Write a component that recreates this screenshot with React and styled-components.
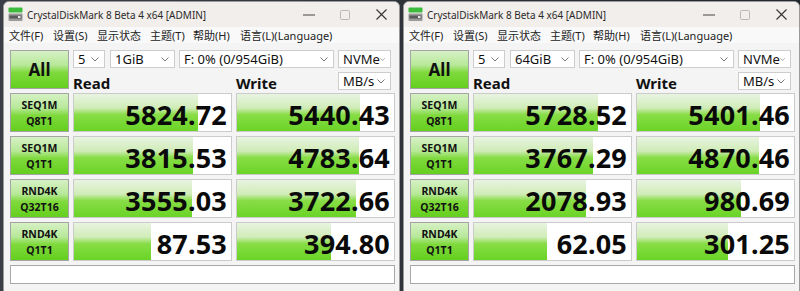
import React from "react";
import styled, { createGlobalStyle } from "styled-components";

const GlobalStyle = createGlobalStyle`
  html, body {
    margin: 0;
    padding: 0;
    width: 800px;
    height: 291px;
    overflow: hidden;
    background: #2b3038;
  }
  * { box-sizing: border-box; }
`;

const UI_FONT = `"Noto Sans", "Noto Sans CJK SC", sans-serif`;

const Desktop = styled.div`
  display: flex;
  gap: 3px;
  padding: 1px 0 0 3px;
  height: 291px;
  background: linear-gradient(90deg, #3a3f47 0%, #23282f 100%);
`;

const Window = styled.div`
  width: 397px;
  height: 300px;
  display: flex;
  flex-direction: column;
  background: #f3f3f3;
  border: 1px solid #9a9a9a;
  border-radius: 6px 6px 0 0;
  overflow: hidden;
  font-family: ${UI_FONT};
`;

const TitleBar = styled.div`
  height: 25px;
  display: flex;
  align-items: center;
  background: #f2eeeb;
  padding-left: 4px;
`;

const TitleText = styled.div`
  flex: 1;
  margin-left: 4px;
  font-size: 10px;
  color: #2a2a2a;
  white-space: nowrap;
`;

const Controls = styled.div`
  display: flex;
  height: 100%;
`;

const ControlButton = styled.div`
  width: 36px;
  height: 100%;
  display: flex;
  align-items: center;
  justify-content: center;
`;

const MenuBar = styled.div`
  height: 16px;
  display: flex;
  align-items: center;
  padding-left: 5px;
  background: #f9f9f9;
  font-size: 11px;
  color: #222;
`;

const MenuItem = styled.span`
  flex: none;
  width: ${({ $w }) => $w}px;
  white-space: nowrap;
`;

const Content = styled.div`
  display: grid;
  grid-template-columns: 59px 159px 159px;
  grid-template-rows: 39px repeat(4, 39px) 19px;
  gap: 4px;
  padding: 7px 0 0 6px;
  background: #f4f4f4;
  flex: 1;
`;

const greenFill = `linear-gradient(180deg, #d6f1c4 0%, #b7e898 38%, #7fd93c 58%, #64cf1e 100%)`;

const AllButton = styled.div`
  border: 1px solid #a4a4a4;
  background: ${greenFill};
  display: flex;
  align-items: center;
  justify-content: center;
  font-weight: 700;
  font-size: 17px;
  color: #111;
`;

const Header = styled.div`
  grid-column: 2 / 4;
  display: flex;
  flex-direction: column;
  gap: 4px;
`;

const ComboRow = styled.div`
  display: flex;
  height: 18px;
`;

const Combo = styled.div`
  width: ${({ $w }) => $w}px;
  margin-left: ${({ $ml }) => $ml || 0}px;
  height: 18px;
  background: #fff;
  border: 1px solid #cdcdcd;
  display: flex;
  align-items: center;
  justify-content: space-between;
  padding: 0 5px 0 4px;
  font-size: 13px;
  color: #111;
  white-space: nowrap;
`;

const LabelRow = styled.div`
  display: flex;
  align-items: center;
  height: 18px;
`;

const ColumnLabel = styled.div`
  width: ${({ $w }) => $w}px;
  font-weight: 700;
  font-size: 15px;
  color: #111;
  line-height: 18px;
  padding-top: 4px;
`;

const TestLabel = styled.div`
  border: 1px solid #a4a4a4;
  background: ${greenFill};
  display: flex;
  flex-direction: column;
  align-items: center;
  justify-content: center;
  font-weight: 700;
  font-size: 10.5px;
  line-height: 16px;
  color: #111;
`;

const Cell = styled.div`
  position: relative;
  background: #fff;
  border: 1px solid #cbcbcb;
  overflow: hidden;
`;

const Bar = styled.div`
  position: absolute;
  left: 0;
  top: 0;
  bottom: 0;
  background: linear-gradient(180deg, #e8f4e0 0%, #d0ecb8 38%, #88dd46 56%, #6ad426 100%);
`;

const Value = styled.div`
  position: relative;
  height: 100%;
  display: flex;
  align-items: center;
  justify-content: flex-end;
  padding: 3px 4px 0 0;
  font-weight: 700;
  font-size: 27px;
  letter-spacing: 0.2px;
  color: #0a0a0a;
`;

const StatusBar = styled.div`
  grid-column: 1 / 4;
  background: #fff;
  border: 1px solid #a8a8a8;
`;

const Chevron = () => (
  <svg width="8" height="5" viewBox="0 0 8 5">
    <path d="M0.5 0.5 L4 4 L7.5 0.5" fill="none" stroke="#7a7a7a" strokeWidth="1" />
  </svg>
);

const AppIcon = () => (
  <svg width="15" height="15" viewBox="0 0 15 15">
    <rect x="0.5" y="0.5" width="14" height="5" rx="1" fill="#3dbb3d" />
    <rect x="0.5" y="6.5" width="14" height="7.5" rx="1" fill="#9a9a9a" />
    <rect x="1.5" y="8.5" width="12" height="3" fill="#5a5a5a" />
    <rect x="10" y="9" width="2.5" height="2" fill="#e8e8e8" />
  </svg>
);

const barWidth = (v) => Math.max(0, Math.min(1, 0.1646 * Math.log10(v) + 0.17)) * 100;

const tests = [
  ["SEQ1M", "Q8T1"],
  ["SEQ1M", "Q1T1"],
  ["RND4K", "Q32T16"],
  ["RND4K", "Q1T1"],
];

const windows = [
  {
    size: "1GiB",
    results: [
      ["5824.72", "5440.43"],
      ["3815.53", "4783.64"],
      ["3555.03", "3722.66"],
      ["87.53", "394.80"],
    ],
  },
  {
    size: "64GiB",
    results: [
      ["5728.52", "5401.46"],
      ["3767.29", "4870.46"],
      ["2078.93", "980.69"],
      ["62.05", "301.25"],
    ],
  },
];

const menu = [
  ["文件(F)", 44],
  ["设置(S)", 44],
  ["显示状态", 53],
  ["主题(T)", 43],
  ["帮助(H)", 47],
  ["语言(L)(Language)", 140],
];

const ResultCell = ({ value }) => (
  <Cell>
    <Bar style={{ width: `${barWidth(parseFloat(value))}%` }} />
    <Value>{value}</Value>
  </Cell>
);

const DiskMarkWindow = ({ size, results }) => (
  <Window>
    <TitleBar>
      <AppIcon />
      <TitleText>CrystalDiskMark 8 Beta 4 x64 [ADMIN]</TitleText>
      <Controls>
        <ControlButton>
          <svg width="12" height="2" viewBox="0 0 12 2">
            <line x1="0" y1="1" x2="12" y2="1" stroke="#444" strokeWidth="1" />
          </svg>
        </ControlButton>
        <ControlButton>
          <svg width="10" height="10" viewBox="0 0 10 10">
            <rect x="0.5" y="0.5" width="9" height="9" rx="1" fill="none" stroke="#b8b8b8" />
          </svg>
        </ControlButton>
        <ControlButton>
          <svg width="11" height="11" viewBox="0 0 11 11">
            <path d="M0.5 0.5 L10.5 10.5 M10.5 0.5 L0.5 10.5" stroke="#333" strokeWidth="1.1" />
          </svg>
        </ControlButton>
      </Controls>
    </TitleBar>
    <MenuBar>
      {menu.map(([label, w]) => (
        <MenuItem key={label} $w={w}>
          {label}
        </MenuItem>
      ))}
    </MenuBar>
    <Content>
      <AllButton>All</AllButton>
      <Header>
        <ComboRow>
          <Combo $w={32}>
            5<Chevron />
          </Combo>
          <Combo $w={65} $ml={5}>
            {size}
            <Chevron />
          </Combo>
          <Combo $w={155} $ml={4}>
            F: 0% (0/954GiB)
            <Chevron />
          </Combo>
          <Combo $w={53} $ml={4}>
            NVMe
            <Chevron />
          </Combo>
        </ComboRow>
        <LabelRow>
          <ColumnLabel $w={163}>Read</ColumnLabel>
          <ColumnLabel $w={102}>Write</ColumnLabel>
          <Combo $w={53}>
            MB/s
            <Chevron />
          </Combo>
        </LabelRow>
      </Header>
      {tests.map(([a, b], i) => (
        <React.Fragment key={a + b}>
          <TestLabel>
            <span>{a}</span>
            <span>{b}</span>
          </TestLabel>
          <ResultCell value={results[i][0]} />
          <ResultCell value={results[i][1]} />
        </React.Fragment>
      ))}
      <StatusBar />
    </Content>
  </Window>
);

export default function App() {
  return (
    <>
      <GlobalStyle />
      <Desktop>
        {windows.map((w) => (
          <DiskMarkWindow key={w.size} {...w} />
        ))}
      </Desktop>
    </>
  );
}
